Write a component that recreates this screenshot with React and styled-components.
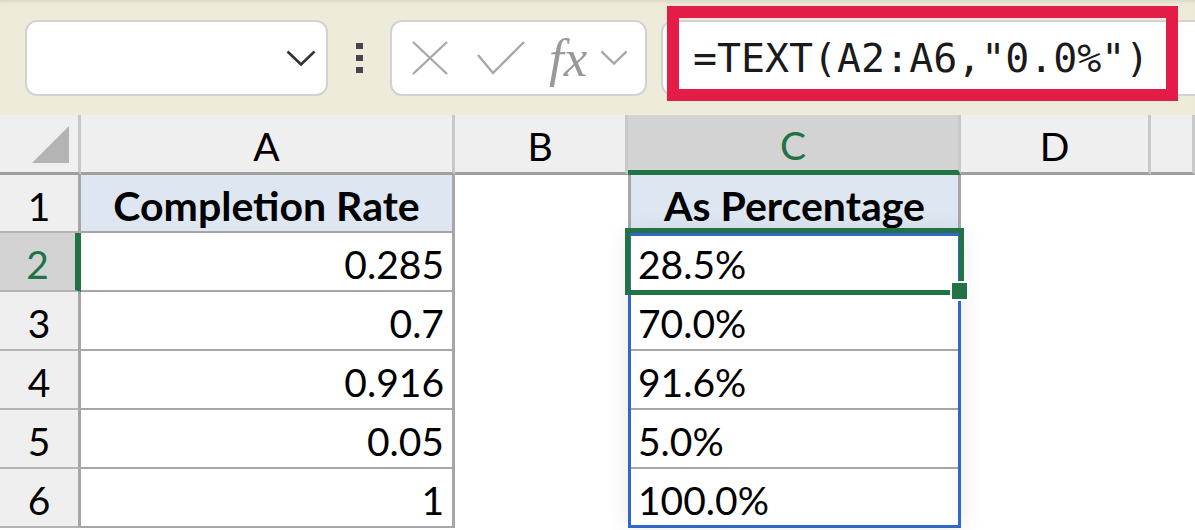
import React from "react";
import styled, { createGlobalStyle } from "styled-components";

const GREEN = "#217346";
const GRID = "#a6a6a6";

const GlobalStyle = createGlobalStyle`
  html, body {
    margin: 0;
    padding: 0;
    background: #ffffff;
    overflow: hidden;
  }
  body {
    font-family: Lato, "Noto Sans", sans-serif;
  }
`;

const ROWS = [
  { n: 1, a: "Completion Rate", c: "As Percentage", title: true },
  { n: 2, a: "0.285", c: "28.5%" },
  { n: 3, a: "0.7", c: "70.0%" },
  { n: 4, a: "0.916", c: "91.6%" },
  { n: 5, a: "0.05", c: "5.0%" },
  { n: 6, a: "1", c: "100.0%" },
];

const COLUMNS = ["A", "B", "C", "D", ""];
const KINDS = ["a", "b", "c", "d", "e"];

const Chevron = ({ color, width = 30, height = 16 }) => (
  <svg width={width} height={height} viewBox="0 0 30 16">
    <polyline points="1.5,1.5 15,14.5 28.5,1.5" fill="none" stroke={color} strokeWidth="2.6" />
  </svg>
);

const App = () => {
  return (
    <>
      <GlobalStyle />
      <Page>
        <Toolbar>
          <NameBox>
            <Chevron color="#2f3337" />
          </NameBox>
          <Grip>
            <span />
            <span />
            <span />
          </Grip>
          <FnBox>
            <svg width="36" height="34" viewBox="0 0 36 34">
              <path d="M1 1 L35 33 M35 1 L1 33" stroke="#a8a8a8" strokeWidth="2.4" fill="none" />
            </svg>
            <svg width="48" height="34" viewBox="0 0 48 34">
              <polyline points="1,14 16,32 47,1" stroke="#a8a8a8" strokeWidth="2.4" fill="none" />
            </svg>
            <Fx>fx</Fx>
            <Chevron color="#a8a8a8" width={28} height={15} />
          </FnBox>
          <FormulaBox>
            <FormulaText>=TEXT(A2:A6,"0.0%")</FormulaText>
            <Highlight />
          </FormulaBox>
        </Toolbar>

        <Sheet>
          <Corner>
            <Triangle />
          </Corner>
          {COLUMNS.map((col, i) => (
            <ColHead key={i} $active={col === "C"}>
              {col}
            </ColHead>
          ))}

          {ROWS.map((row) => (
            <React.Fragment key={row.n}>
              <RowHead $row={row.n + 1} $active={row.n === 2}>
                {row.n}
              </RowHead>
              {KINDS.map((kind, i) => (
                <Cell key={kind} $row={row.n + 1} $col={i + 2} $kind={kind} $title={row.title}>
                  {kind === "a" ? row.a : kind === "c" ? row.c : null}
                </Cell>
              ))}
            </React.Fragment>
          ))}

          <Range />
          <Selection>
            <FillHandle />
          </Selection>
        </Sheet>
      </Page>
    </>
  );
};

const Page = styled.div`
  width: 1195px;
  height: 530px;
  overflow: hidden;
  background: #ffffff;
`;

const Toolbar = styled.div`
  height: 115px;
  display: flex;
  align-items: center;
  padding-left: 25px;
  background: #eeebdb;
  box-shadow: inset 0 5px 5px -4px rgba(0, 0, 0, 0.12);
`;

const Box = styled.div`
  box-sizing: border-box;
  height: 76px;
  background: #ffffff;
  border: 2px solid #d2d2d2;
  border-radius: 12px;
  display: flex;
  align-items: center;
`;

const NameBox = styled(Box)`
  width: 303px;
  justify-content: flex-end;
  padding-right: 10px;
`;

const Grip = styled.div`
  display: flex;
  flex-direction: column;
  gap: 6px;
  margin: 0 27px 0 28px;

  span {
    width: 7px;
    height: 6px;
    background: #45474a;
  }
`;

const FnBox = styled(Box)`
  width: 257px;
  padding-left: 20px;

  svg:nth-child(2) {
    margin-left: 29px;
  }
`;

const Fx = styled.span`
  margin: 0 13px 0 24px;
  font-family: "Liberation Serif", "DejaVu Serif", serif;
  font-style: italic;
  font-size: 53px;
  line-height: 1;
  color: #999999;
  transform: translateY(1px);
`;

const FormulaBox = styled(Box)`
  position: relative;
  flex: 1;
  margin-left: 14px;
  margin-right: -30px;
  padding-left: 30px;
`;

const FormulaText = styled.span`
  font-family: "DejaVu Sans Mono", "Liberation Mono", monospace;
  font-size: 39.9px;
  color: #1a1a1a;
  white-space: pre;
`;

const Highlight = styled.div`
  position: absolute;
  left: 4px;
  top: -16px;
  width: 511px;
  height: 95px;
  box-sizing: border-box;
  border: 12px solid #e31d48;
`;

const Sheet = styled.div`
  display: grid;
  grid-template-columns: 81px 374px 173px 333px 190px 1fr;
  grid-template-rows: 60px 58px repeat(5, 59px);
  font-size: 39px;
  color: #000000;
`;

const Corner = styled.div`
  box-sizing: border-box;
  background: #efefef;
  border-right: 3px solid #c9c9c9;
  border-bottom: 3px solid #9f9f9f;
  padding: 11px 0 0 32px;
`;

const Triangle = styled.div`
  width: 37px;
  height: 37px;
  background: #b4b4b4;
  clip-path: polygon(100% 0, 100% 100%, 0 100%);
`;

const ColHead = styled.div`
  box-sizing: border-box;
  display: flex;
  align-items: center;
  justify-content: center;
  padding-top: 5px;
  background: ${(p) => (p.$active ? "#d3d3d3" : "#efefef")};
  color: ${(p) => (p.$active ? GREEN : "#000000")};
  border-right: 3px solid #c9c9c9;
  border-bottom: ${(p) => (p.$active ? `5px solid ${GREEN}` : "3px solid #9f9f9f")};
`;

const RowHead = styled.div`
  grid-column: 1;
  grid-row: ${(p) => p.$row};
  box-sizing: border-box;
  display: flex;
  align-items: center;
  justify-content: center;
  padding-top: 5px;
  background: ${(p) => (p.$active ? "#d3d3d3" : "#efefef")};
  color: ${(p) => (p.$active ? GREEN : "#000000")};
  border-right: ${(p) => (p.$active ? `6px solid ${GREEN}` : `3px solid ${GRID}`)};
  border-bottom: 2px solid #b4b4b4;
`;

const Cell = styled.div`
  grid-column: ${(p) => p.$col};
  grid-row: ${(p) => p.$row};
  box-sizing: border-box;
  display: flex;
  align-items: center;
  padding-top: 5px;
  white-space: nowrap;
  background: ${(p) => (p.$title && (p.$kind === "a" || p.$kind === "c") ? "#dde6f1" : "#ffffff")};
  font-weight: ${(p) => (p.$title ? 700 : 400)};
  font-size: ${(p) => (p.$title ? "41px" : "39px")};
  justify-content: ${(p) =>
    p.$title ? "center" : p.$kind === "a" ? "flex-end" : "flex-start"};
  padding-right: ${(p) => (p.$kind === "a" && !p.$title ? "8px" : "0")};
  padding-left: ${(p) => (p.$kind === "c" && !p.$title ? "7px" : "0")};
  border-bottom: ${(p) => (p.$kind === "a" || p.$kind === "c" ? `2px solid ${GRID}` : "none")};
  border-right: ${(p) => (p.$kind === "a" || p.$kind === "c" ? `3px solid ${GRID}` : "none")};
  border-left: ${(p) => (p.$kind === "c" ? `3px solid ${GRID}` : "none")};
`;

const Range = styled.div`
  grid-column: 4;
  grid-row: 3 / span 5;
  border: 3px solid #3367c7;
  box-shadow: 0 0 22px rgba(0, 0, 0, 0.1);
  pointer-events: none;
`;

const Selection = styled.div`
  position: relative;
  grid-column: 4;
  grid-row: 3;
  margin: -5px -3px -3px -3px;
  border: 5px solid ${GREEN};
  pointer-events: none;
`;

const FillHandle = styled.div`
  position: absolute;
  right: -10px;
  bottom: -11px;
  width: 15px;
  height: 16px;
  background: ${GREEN};
  border: 2px solid #ffffff;
`;

export default App;
